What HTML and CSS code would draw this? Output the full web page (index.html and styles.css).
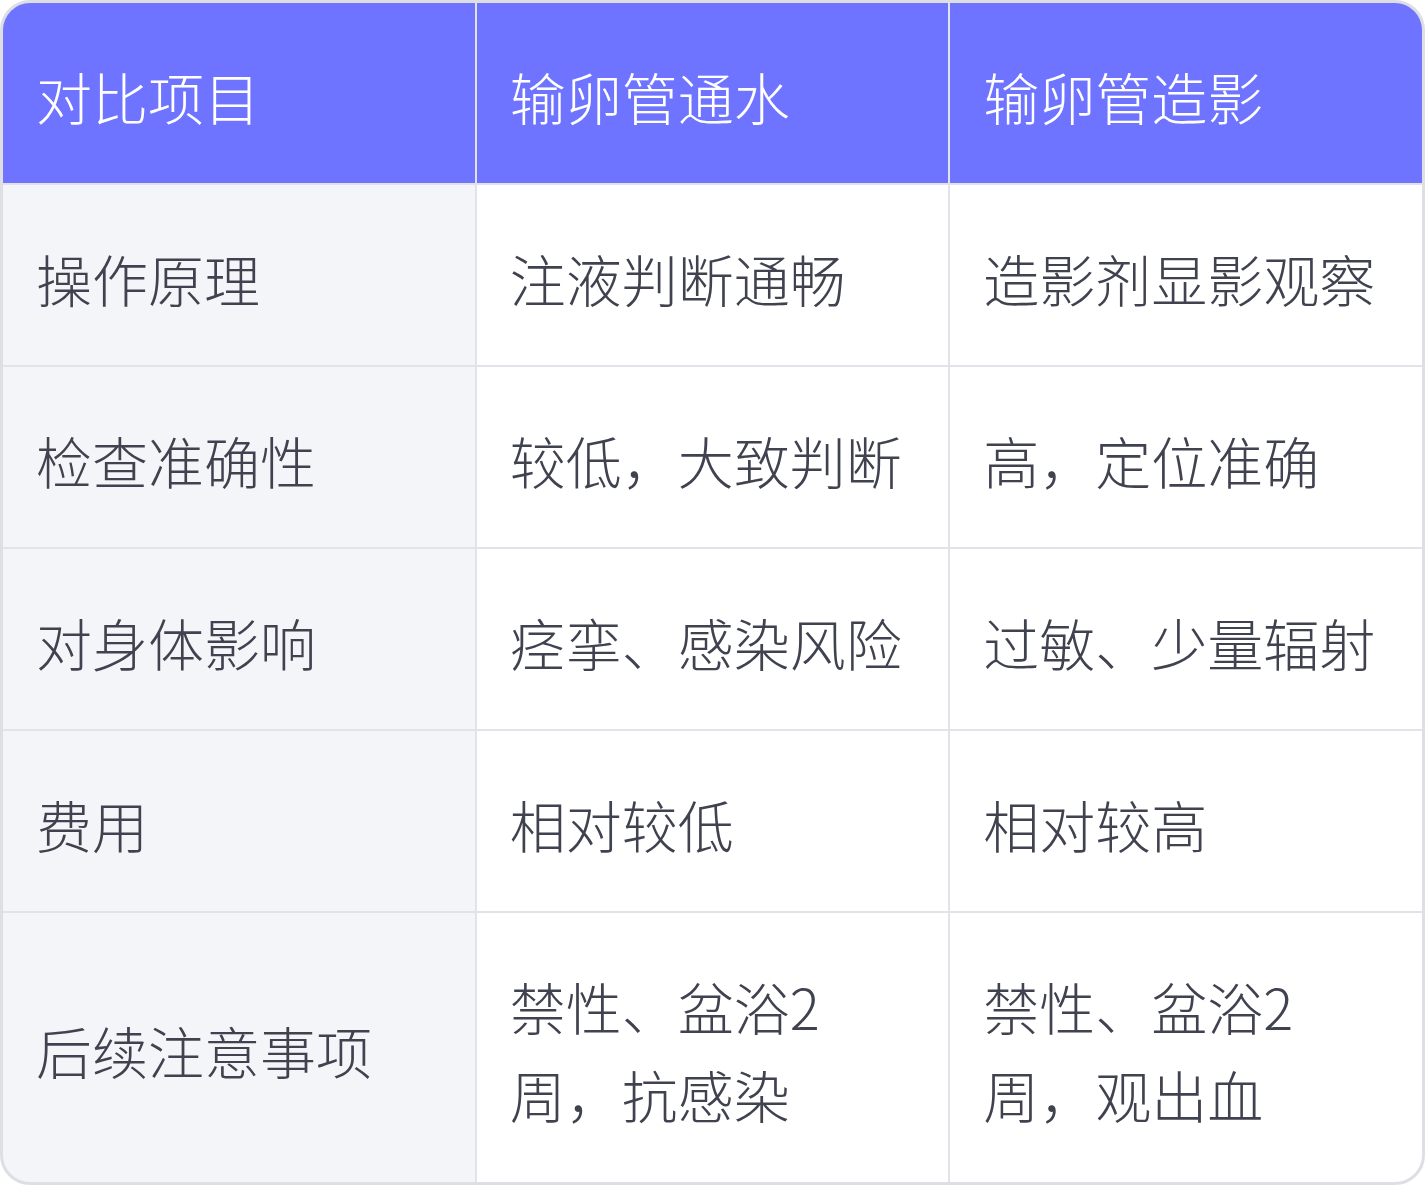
FILE: index.html
```html
<!DOCTYPE html>
<html lang="zh-CN">
<head>
<meta charset="utf-8">
<title>输卵管通水 vs 输卵管造影</title>
<link rel="stylesheet" href="styles.css">
</head>
<body>
<div class="table">
  <div class="cell head">对比项目</div>
  <div class="cell head">输卵管通水</div>
  <div class="cell head">输卵管造影</div>

  <div class="cell label">操作原理</div>
  <div class="cell">注液判断通畅</div>
  <div class="cell">造影剂显影观察</div>

  <div class="cell label">检查准确性</div>
  <div class="cell">较低，大致判断</div>
  <div class="cell">高，定位准确</div>

  <div class="cell label">对身体影响</div>
  <div class="cell">痉挛、感染风险</div>
  <div class="cell">过敏、少量辐射</div>

  <div class="cell label">费用</div>
  <div class="cell">相对较低</div>
  <div class="cell">相对较高</div>

  <div class="cell label">后续注意事项</div>
  <div class="cell">禁性、盆浴2周，抗感染</div>
  <div class="cell">禁性、盆浴2周，观出血</div>
</div>
</body>
</html>
```

FILE: styles.css
```css
html, body {
  margin: 0;
  padding: 0;
  background: #ffffff;
}

body {
  width: 1425px;
  height: 1186px;
}

.table {
  box-sizing: border-box;
  width: 1425px;
  display: grid;
  grid-template-columns: 1fr 1fr 1fr;
  gap: 2px;
  background: #e2e3e8;
  border: 3px solid #dedfe4;
  border-radius: 30px;
  overflow: hidden;
  font-family: "Noto Sans CJK SC", "Noto Sans", sans-serif;
  font-size: 56px;
  font-weight: 200;
  line-height: 88px;
  color: #40434f;
}

.cell {
  background: #ffffff;
  padding: 49px 34px 43px 33px;
  display: flex;
  align-items: center;
}

.cell.label {
  background: #f4f5f9;
}

.cell.head {
  background: #6e74ff;
  color: #ffffff;
}

.table > .cell:nth-last-child(-n+3) {
  padding-bottom: 44px;
}
```
